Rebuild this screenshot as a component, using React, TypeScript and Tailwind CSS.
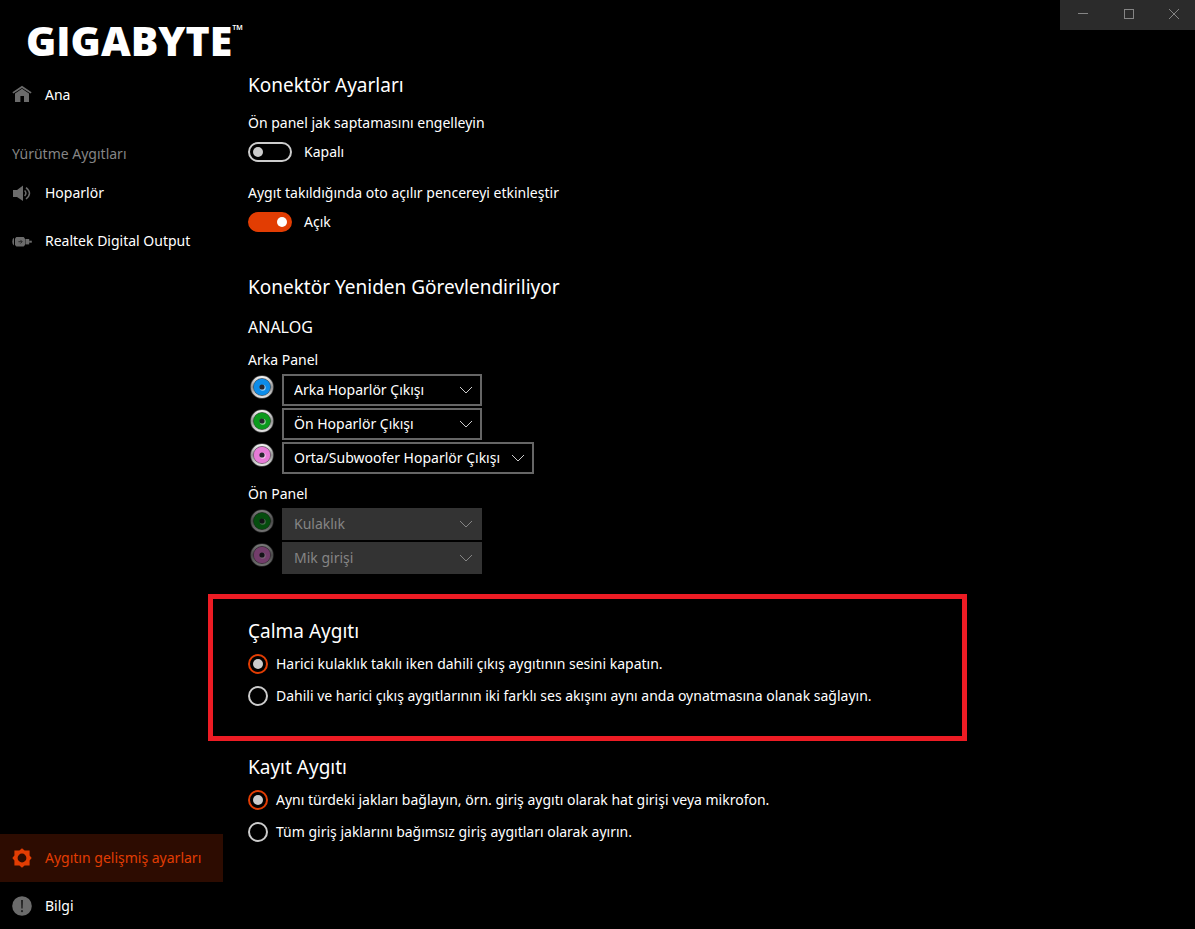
import { useState } from 'react';
import type { ReactNode } from 'react';

const jackColors = {
  blue: '#0c8ce9',
  green: '#0a9a1c',
  pink: '#e67bd6',
};

type JackColor = keyof typeof jackColors;

const rearJacks = [
  { id: 'rear-blue', color: 'blue', value: 'Arka Hoparlör Çıkışı', wide: false },
  { id: 'rear-green', color: 'green', value: 'Ön Hoparlör Çıkışı', wide: false },
  { id: 'rear-pink', color: 'pink', value: 'Orta/Subwoofer Hoparlör Çıkışı', wide: true },
] as const;

const frontJacks = [
  { id: 'front-green', color: 'green', value: 'Kulaklık' },
  { id: 'front-pink', color: 'pink', value: 'Mik girişi' },
] as const;

const playbackOptions = [
  'Harici kulaklık takılı iken dahili çıkış aygıtının sesini kapatın.',
  'Dahili ve harici çıkış aygıtlarının iki farklı ses akışını aynı anda oynatmasına olanak sağlayın.',
];

const recordingOptions = [
  'Aynı türdeki jakları bağlayın, örn. giriş aygıtı olarak hat girişi veya mikrofon.',
  'Tüm giriş jaklarını bağımsız giriş aygıtları olarak ayırın.',
];

function HomeIcon() {
  return (
    <svg width="20" height="20" viewBox="0 0 20 20" fill="#6b6b6b" aria-hidden="true">
      <path d="M10 0.8 L19.6 7.2 L18.6 8.6 L10 3 L1.4 8.6 L0.4 7.2 Z" />
      <path d="M10 3.8 L17 8.4 V17 H12 V11 H8.4 V17 H3 V8.4 Z" />
    </svg>
  );
}

function SpeakerIcon() {
  return (
    <svg width="20" height="20" viewBox="0 0 20 20" aria-hidden="true">
      <path d="M1 7 H5 L11 2.6 V18 L5 14 H1 Z" fill="#6b6b6b" />
      <g fill="none" stroke="#6b6b6b" strokeWidth="1.5">
        <path d="M12.6 7.6 Q15.2 10.4 12.6 13" />
        <path d="M14 4.6 Q21 10.4 14 16" />
      </g>
    </svg>
  );
}

function DigitalIcon() {
  return (
    <svg width="20" height="20" viewBox="0 0 20 20" fill="#6b6b6b" aria-hidden="true">
      <path d="M2 6.8 V14.6 Q0.3 14 0.3 10.7 Q0.3 7.4 2 6.8 Z" />
      <path d="M4.4 6 H11.6 L13 7.4 V14 L11.6 15.4 H4.4 L3 14 V7.4 Z" />
      <rect x="13.4" y="8" width="3.8" height="5.4" />
      <rect x="17.2" y="9.7" width="2.6" height="2" />
      <path d="M6.4 10.7 H10 M8.4 8.9 L10.2 10.7 L8.4 12.5" fill="none" stroke="#2b2b2b" />
    </svg>
  );
}

function GearIcon() {
  return (
    <svg width="20" height="20" viewBox="0 0 20 20" aria-hidden="true">
      <path
        fill="#e23d03"
        fillRule="evenodd"
        d="M10 0.3 L12.6 2.4 H17.6 V7.4 L19.7 10 L17.6 12.6 V17.6 H12.6 L10 19.7 L7.4 17.6 H2.4 V12.6 L0.3 10 L2.4 7.4 V2.4 H7.4 Z M10 5.6 A4.4 4.4 0 1 0 10 14.4 A4.4 4.4 0 1 0 10 5.6 Z"
      />
    </svg>
  );
}

function InfoIcon() {
  return (
    <svg width="20" height="20" viewBox="0 0 20 20" aria-hidden="true">
      <circle cx="10" cy="10" r="9.8" fill="#6b6b6b" />
      <path d="M9 4 H11 L10.7 12.6 H9.3 Z" fill="#222" />
      <circle cx="10" cy="15.2" r="1.1" fill="#222" />
    </svg>
  );
}

function Jack({ color, dimmed = false }: { color: JackColor; dimmed?: boolean }) {
  const metal = `metal-${color}-${dimmed}`;
  return (
    <svg
      width="24"
      height="24"
      viewBox="0 0 24 24"
      className={dimmed ? 'opacity-50' : ''}
      aria-hidden="true"
    >
      <defs>
        <linearGradient id={metal} x1="0" y1="0" x2="0" y2="1">
          <stop offset="0" stopColor="#f0f0f0" />
          <stop offset="0.5" stopColor="#909090" />
          <stop offset="1" stopColor="#e0e0e0" />
        </linearGradient>
      </defs>
      <circle cx="12" cy="12" r="11.8" fill="#4a4a4a" />
      <circle cx="12" cy="12" r="9.8" fill="none" stroke={`url(#${metal})`} strokeWidth="2.6" />
      <circle cx="12" cy="12" r="8.6" fill={jackColors[color]} stroke="#333" strokeOpacity="0.4" />
      <circle cx="12.7" cy="12.7" r="3" fill="#fff" fillOpacity="0.6" />
      <circle cx="12" cy="12" r="2.6" fill="#26262e" />
    </svg>
  );
}

function NavItem({
  icon,
  label,
  active = false,
}: {
  icon: ReactNode;
  label: string;
  active?: boolean;
}) {
  return (
    <a
      href="#"
      className={`flex h-12 items-center gap-[13px] pl-3 ${
        active ? 'bg-[#2d0c01] text-[#e23d03]' : 'text-white'
      }`}
    >
      {icon}
      {label}
    </a>
  );
}

function Toggle({ label, initial }: { label: string; initial: boolean }) {
  const [on, setOn] = useState(initial);
  return (
    <label className="block">
      <span className="block">{label}</span>
      <span className="mt-[9px] flex items-center gap-3">
        <input
          type="checkbox"
          role="switch"
          checked={on}
          onChange={() => setOn(!on)}
          className="flex h-5 w-11 appearance-none items-center rounded-full border-2 border-[#ccc] px-[3px] before:size-[10px] before:rounded-full before:bg-[#ccc] checked:justify-end checked:border-[#e23d03] checked:bg-[#e23d03] checked:before:bg-white"
        />
        {on ? 'Açık' : 'Kapalı'}
      </span>
    </label>
  );
}

function JackSelect({
  id,
  color,
  value,
  wide = false,
  disabled = false,
}: {
  id: string;
  color: JackColor;
  value: string;
  wide?: boolean;
  disabled?: boolean;
}) {
  return (
    <div className="flex gap-2 pl-[2px]">
      <label htmlFor={id} aria-label={value} className="pt-px">
        <Jack color={color} dimmed={disabled} />
      </label>
      <div className={`relative ${wide ? 'w-[252px]' : 'w-[200px]'}`}>
        <select
          id={id}
          disabled={disabled}
          defaultValue={value}
          className="block h-8 w-full appearance-none border-2 border-[#666] bg-black pl-[10px] text-white disabled:border-[#333] disabled:bg-[#333] disabled:text-[#858585] disabled:opacity-100"
        >
          <option>{value}</option>
        </select>
        <svg
          width="14"
          height="8"
          viewBox="0 0 14 8"
          fill="none"
          stroke={disabled ? '#858585' : '#ccc'}
          className="pointer-events-none absolute top-3 right-[9px]"
          aria-hidden="true"
        >
          <path d="M1 1 L7 7 L13 1" />
        </svg>
      </div>
    </div>
  );
}

function RadioGroup({ title, name, options }: { title: string; name: string; options: string[] }) {
  return (
    <fieldset>
      <legend className="text-[19px] leading-7">{title}</legend>
      <div className="pt-[3px]">
        {options.map((option, index) => (
          <label key={option} className="flex min-h-8 items-center gap-2">
            <input
              type="radio"
              name={name}
              defaultChecked={index === 0}
              className="flex size-5 shrink-0 appearance-none items-center justify-center rounded-full border-2 border-[#ccc] checked:border-[#e23d03] checked:before:size-[10px] checked:before:rounded-full checked:before:bg-[#ccc]"
            />
            {option}
          </label>
        ))}
      </div>
    </fieldset>
  );
}

function WindowControls() {
  return (
    <div className="absolute top-0 right-0 flex h-[30px] w-[135px] bg-[#2b2b2b] pb-[2px] text-[#858585]">
      <button type="button" aria-label="Simge durumuna küçült" className="flex w-[46px] items-center justify-center">
        <svg width="10" height="10" viewBox="0 0 10 10" stroke="currentColor">
          <path d="M0 4.5 H10" />
        </svg>
      </button>
      <button type="button" aria-label="Ekranı kapla" className="flex w-[46px] items-center justify-center">
        <svg width="10" height="10" viewBox="0 0 10 10" fill="none" stroke="currentColor">
          <rect x="0.5" y="0.5" width="9" height="9" />
        </svg>
      </button>
      <button type="button" aria-label="Kapat" className="flex flex-1 items-center justify-center">
        <svg width="10" height="10" viewBox="0 0 10 10" stroke="currentColor">
          <path d="M0 0 L10 10 M10 0 L0 10" />
        </svg>
      </button>
    </div>
  );
}

export default function App() {
  return (
    <div className="relative flex min-h-screen overflow-hidden bg-black font-['Noto_Sans',sans-serif] text-[14px] leading-5 text-white">
      <aside className="flex w-[223px] shrink-0 flex-col">
        <div className="flex h-[71px] items-start pt-4 pl-[26px] font-['Open_Sans',sans-serif]">
          <span className="text-[41px] leading-[48px] font-extrabold">GIGABYTE</span>
          <span className="pt-[6px] text-[14px] leading-4 font-semibold">™</span>
        </div>
        <nav className="flex flex-1 flex-col">
          <NavItem icon={<HomeIcon />} label="Ana" />
          <h2 className="mt-[25px] mb-[5px] pl-3 text-[#858585]">Yürütme Aygıtları</h2>
          <NavItem icon={<SpeakerIcon />} label="Hoparlör" />
          <NavItem icon={<DigitalIcon />} label="Realtek Digital Output" />
          <div className="mt-auto -mb-px">
            <NavItem icon={<GearIcon />} label="Aygıtın gelişmiş ayarları" active />
            <NavItem icon={<InfoIcon />} label="Bilgi" />
          </div>
        </nav>
      </aside>

      <main className="flex-1 pt-[71px] pl-[25px]">
        <section>
          <h1 className="text-[19px] leading-7">Konektör Ayarları</h1>
          <div className="mt-[14px] flex flex-col gap-[21px]">
            <Toggle label="Ön panel jak saptamasını engelleyin" initial={false} />
            <Toggle label="Aygıt takıldığında oto açılır pencereyi etkinleştir" initial />
          </div>
        </section>

        <section className="mt-[41px]">
          <h1 className="text-[19px] leading-7">Konektör Yeniden Görevlendiriliyor</h1>
          <h2 className="mt-4 text-[16px]">ANALOG</h2>
          <h3 className="mt-[13px]">Arka Panel</h3>
          <div className="mt-1 flex flex-col gap-[2px]">
            {rearJacks.map((jack) => (
              <JackSelect key={jack.id} {...jack} />
            ))}
          </div>
          <h3 className="mt-[10px]">Ön Panel</h3>
          <div className="mt-1 flex flex-col gap-[2px]">
            {frontJacks.map((jack) => (
              <JackSelect key={jack.id} {...jack} disabled />
            ))}
          </div>
        </section>

        {/* the frame reaches past the section on every side */}
        <section className="relative mt-[43px] max-w-[719px]">
          <div className="pointer-events-none absolute -top-[23px] right-0 -bottom-[29px] -left-10 border-5 border-[#ed1c24]" />
          <RadioGroup title="Çalma Aygıtı" name="playback" options={playbackOptions} />
        </section>

        <section className="mt-[41px]">
          <RadioGroup title="Kayıt Aygıtı" name="recording" options={recordingOptions} />
        </section>
      </main>

      <WindowControls />
    </div>
  );
}
